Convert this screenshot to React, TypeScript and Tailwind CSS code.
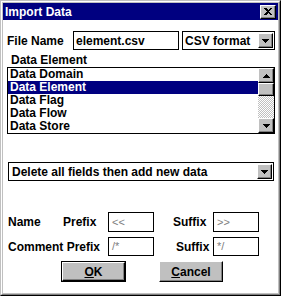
import React from 'react';

const raised =
  'bg-[#c0c0c0] border border-t-white border-l-white border-r-black border-b-black shadow-[inset_-1px_-1px_#808080]';

const dither =
  'bg-[repeating-conic-gradient(#c0c0c0_0_25%,#ffffff_0_50%)] bg-[length:2px_2px]';

function Arrow({ up = false }: { up?: boolean }) {
  const rows = [7, 5, 3, 1];
  return (
    <svg width="7" height="4" shapeRendering="crispEdges">
      {rows.map((w, i) => (
        <rect key={i} x={(7 - w) / 2} y={up ? 3 - i : i} width={w} height={1} fill="#000" />
      ))}
    </svg>
  );
}

function DropButton() {
  return (
    <div className={`${raised} w-[15px] h-[15px] mr-px flex items-center justify-center shrink-0`}>
      <Arrow />
    </div>
  );
}

function SmallInput({ value, h }: { value: string; h: string }) {
  return (
    <div className={`w-[46px] ${h} border border-black flex items-center pl-[3px] text-[11px] font-normal text-[#808080]`}>
      {value}
    </div>
  );
}

const items = ['Data Domain', 'Data Element', 'Data Flag', 'Data Flow', 'Data Store'];

export default function App() {
  return (
    <div className="w-[281px] h-[296px] bg-[#c0c0c0] border border-t-[#c0c0c0] border-l-[#c0c0c0] border-r-black border-b-black font-['Liberation_Sans',Arial,sans-serif] text-[12px] font-bold text-black select-none">
      <div className="h-full border border-t-white border-l-white border-r-[#808080] border-b-[#808080] p-px flex flex-col">
        {/* title bar */}
        <div className="h-[17px] bg-[#000080] flex items-center justify-between pl-[2px] pr-[2px] shrink-0">
          <span className="text-white leading-none">Import Data</span>
          <div className={`${raised} w-[16px] h-[14px] flex items-center justify-center`}>
            <svg width="8" height="7" shapeRendering="crispEdges">
              <path d="M0 0h2l2 2 2-2h2v1L5 3.5 8 6v1H6L4 5 2 7H0V6l3-2.5L0 1z" fill="#000" />
            </svg>
          </div>
        </div>

        {/* body */}
        <div className="flex-1 bg-white flex flex-col pl-[4px] pr-[3px]">
          <div className="mt-[11px] flex items-center">
            <span className="w-[66px]">File Name</span>
            <div className="w-[106px] h-[19px] border border-black flex items-center pl-[2px]">element.csv</div>
            <div className="ml-[3px] flex-1 h-[19px] border border-black flex items-center justify-between pl-[2px]">
              <span>CSV format</span>
              <DropButton />
            </div>
          </div>

          <div className="ml-[4px] mt-[3px] h-[14px] leading-[14px]">Data Element</div>

          <div className="h-[67px] border border-black flex">
            <div className="flex-1 flex flex-col">
              {items.map((it) => (
                <div
                  key={it}
                  className={`h-[13px] leading-[13px] pl-[2px] ${it === 'Data Element' ? 'bg-[#000080] text-white' : ''}`}
                >
                  {it}
                </div>
              ))}
            </div>
            <div className="w-[16px] flex flex-col">
              <div className={`${raised} h-[15px] flex items-center justify-center`}>
                <Arrow up />
              </div>
              <div className={`${raised} h-[13px]`} />
              <div className={`flex-1 ${dither}`} />
              <div className={`${raised} h-[15px] flex items-center justify-center`}>
                <Arrow />
              </div>
            </div>
          </div>

          <div className="mt-[28px] ml-px mr-px h-[19px] border border-black flex items-center justify-between pl-[3px]">
            <span>Delete all fields then add new data</span>
            <DropButton />
          </div>

          <div className="mt-[31px] flex items-center">
            <span className="ml-px w-[55px]">Name</span>
            <span className="w-[45px]">Prefix</span>
            <SmallInput value="<<" h="h-[20px]" />
            <span className="ml-[19px] w-[40px]">Suffix</span>
            <SmallInput value=">>" h="h-[20px]" />
          </div>

          <div className="mt-[5px] flex items-center">
            <span className="ml-px w-[100px]">Comment Prefix</span>
            <SmallInput value="/*" h="h-[19px]" />
            <span className="ml-[22px] w-[37px]">Suffix</span>
            <SmallInput value="*/" h="h-[19px]" />
          </div>

          <div className="mt-[5px] flex">
            <div className="ml-[54px] border border-black">
              <div className={`${raised} w-[63px] h-[19px] flex items-center justify-center`}>
                <span><span className="underline">O</span>K</span>
              </div>
            </div>
            <div className={`${raised} ml-[33px] w-[64px] h-[21px] flex items-center justify-center`}>
              <span><span className="underline">C</span>ancel</span>
            </div>
          </div>
        </div>
      </div>
    </div>
  );
}
